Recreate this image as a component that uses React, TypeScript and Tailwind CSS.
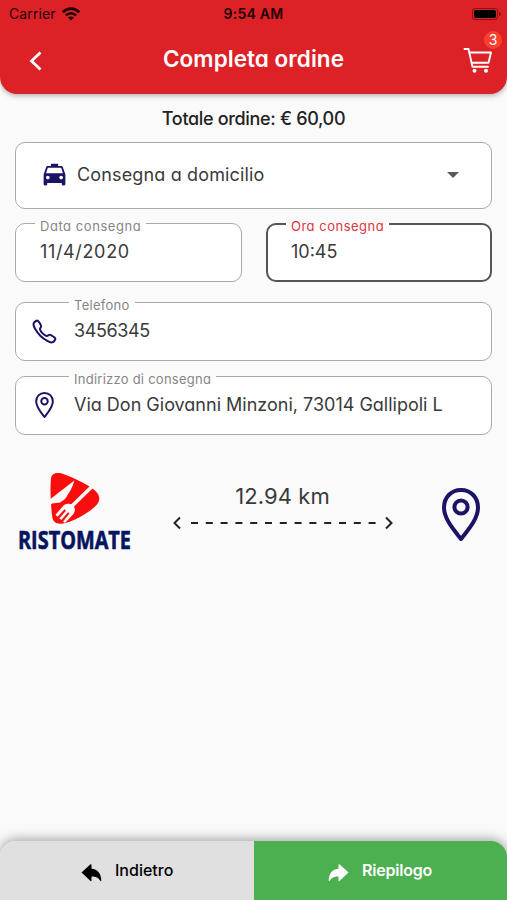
import type { ReactNode } from "react";
import clsx from "clsx";
import { IoCallOutline } from "react-icons/io5";
import { MdLocalTaxi } from "react-icons/md";

type FieldProps = {
  label: string;
  value: string;
  labelClass?: string;
  valueClass?: string;
  icon?: ReactNode;
  focused?: boolean;
  className?: string;
};

function Field({ label, value, labelClass, valueClass, icon, focused, className }: FieldProps) {
  return (
    <fieldset
      className={clsx(
        "h-[59px] min-w-0 rounded-[10px] bg-white",
        focused ? "border-2 border-[#555]" : "border border-[#a9a9a9]",
        className,
      )}
    >
      <legend
        className={clsx(
          "h-0 whitespace-nowrap px-[5px] text-[13px] leading-[4px]",
          icon ? "ml-[53px]" : focused ? "ml-[18px]" : "ml-[19px]",
          focused ? "text-[#e0343b]" : "text-[#858585]",
          labelClass,
        )}
      >
        {label}
      </legend>
      <div className={clsx("flex items-center", focused ? "h-[53px]" : "h-[55px]")}>
        {icon && <div className="flex w-[57px] shrink-0 justify-center text-[#1b1464]">{icon}</div>}
        <span
          className={clsx(
            "whitespace-nowrap text-lg leading-none text-[#3a3a3a]",
            icon ? "pl-px" : focused ? "pl-[23px]" : "pl-6",
            valueClass,
          )}
        >
          {value}
        </span>
      </div>
    </fieldset>
  );
}

function Pin({ className, strokeWidth }: { className: string; strokeWidth: number }) {
  return (
    <svg viewBox="0 0 38 53" className={className} fill="none" stroke="#1b1464" strokeWidth={strokeWidth} strokeLinejoin="round">
      <path d="M19 2C9 2 2 9.500 2 19.500C2 31 12 42 19 51C26 42 36 31 36 19.500C36 9.500 29 2 19 2Z" />
      <circle cx="19" cy="19" r="6.600" />
    </svg>
  );
}

function Cart() {
  return (
    <svg viewBox="0 0 30 26" className="h-[26px] w-[30px]" fill="none" stroke="white" strokeWidth="1.900" strokeLinecap="round" strokeLinejoin="round">
      <path d="M1.500 1H5.500L9.500 18.700H25" />
      <path d="M6.500 4.500H28L25.500 14.700H8.700" />
      <circle cx="11.500" cy="22.800" r="2" fill="white" stroke="none" />
      <circle cx="23" cy="22.800" r="2" fill="white" stroke="none" />
    </svg>
  );
}

function Wifi() {
  return (
    <svg viewBox="0 0 18 14" className="h-[14px] w-[18px]" fill="none" stroke="#1c0304" strokeWidth="2.700">
      <path d="M0.800 5.200C5.500 0.400 12.500 0.400 17.200 5.200" />
      <path d="M3.900 8.400C6.800 5.500 11.200 5.500 14.100 8.400" />
      <path d="M9 13.500L6 10.500C7.700 9 10.300 9 12 10.500Z" fill="#1c0304" stroke="none" />
    </svg>
  );
}

function TurnArrow({ className }: { className: string }) {
  return (
    <svg viewBox="0 0 20 18" className={className} fill="currentColor">
      <path d="M0 8.500L9 0.300Q10 0 10 1V4.700C16 4.900 19.800 9.500 19.800 16.800Q19.500 17.600 18.800 16.800C16.800 13.700 14.500 12.500 10 12.500V16.500Q10 17.500 9 17Z" />
    </svg>
  );
}

function Logo() {
  return (
    <svg viewBox="0 0 116 90" className="h-[90px] w-[116px] overflow-visible">
      <path d="M34 7C34.500 3 39 1 44 2.300C51 4.500 64 10 74 16.500C84 23 85 30 77 36.500C69 43 58 50 46 52.500C39 53.500 35.500 51 35 44C33.500 31 33 18 34 7Z" fill="#fc0d0d" />
      {/* knife */}
      <path d="M57.300 9.500L31.500 29.500V35.500L35 32.500L43 31.500L48 28C52 22 56 16 57.300 9.500Z" fill="#fafafa" />
      {/* fork */}
      <path d="M75 15.500L55 35" stroke="#fafafa" strokeWidth="3.600" />
      <path d="M47 34C50 32 54 32.500 56 34.500C58.500 37 58.500 40.500 56 43.500L48 52L46 50.500L52.500 42.500L51 41.200L44.300 49L42.300 47.300L49 39.700L47.500 38.300L40.500 45.700L38.500 43.700Z" fill="#fafafa" />
      <text x="1" y="77.500" textLength="113" lengthAdjust="spacingAndGlyphs" fill="#07145f" stroke="#07145f" strokeWidth="0.600" className="font-['Open_Sans',sans-serif] text-[25px] font-bold">
        RISTOMATE
      </text>
    </svg>
  );
}

export default function App() {
  return (
    <div className="flex h-[900px] w-[507px] flex-col overflow-hidden bg-[#fafafa] font-['Inter',sans-serif] [font-feature-settings:'cv11']">
      <header className="h-[94px] shrink-0 rounded-b-[17px] bg-[#dc2127] shadow-[0_2px_5px_rgba(0,0,0,0.28)]">
        <div className="grid h-[27px] grid-cols-3 items-center text-[#1c0304] [font-feature-settings:normal]">
          <div className="flex items-center gap-1.5 pl-[9px] text-sm leading-none">
            <span className="tracking-[0.1px]">Carrier</span>
            <Wifi />
          </div>
          <span className="text-center text-sm font-semibold leading-none tracking-[0.25px]">9:54 AM</span>
          <div className="flex items-center justify-end gap-px pr-1.5">
            <div className="h-[12px] w-[26px] rounded-[3px] border border-[#8b1216] p-px">
              <div className="h-full rounded-[2px] bg-black" />
            </div>
            <div className="h-1 w-0.5 rounded-r bg-[#8b1216]" />
          </div>
        </div>
        <div className="grid h-[67px] grid-cols-[1fr_auto_1fr] items-center px-[29px]">
          <svg viewBox="0 0 13 20" className="h-5 w-[13px]" fill="none" stroke="white" strokeWidth="2.800">
            <path d="M11.500 1.500L2.500 10L11.500 18.500" />
          </svg>
          <h1 className="pb-1 text-[22.500px] font-semibold tracking-[0.050px] text-white">Completa ordine</h1>
          <div className="relative -mr-[15px] w-[30px] justify-self-end">
            <Cart />
            <span className="absolute -top-[17px] left-[21px] flex size-[18px] items-center justify-center rounded-full bg-[#f9402f] text-sm text-white">3</span>
          </div>
        </div>
      </header>

      <main className="flex flex-1 flex-col px-[15px]">
        <h2 className="pt-[15px] text-center text-lg font-medium leading-5 tracking-[-0.330px] text-[#222]">Totale ordine: € 60,00</h2>

        <div className="mt-[13px] flex h-[67px] items-center rounded-[10px] border border-[#a9a9a9] bg-white pb-0.5 pl-6 pr-8">
          <MdLocalTaxi className="size-[29px] text-[#1b1464]" />
          <span className="ml-2 flex-1 text-lg leading-none tracking-[0.150px] text-[#3a3a3a]">Consegna a domicilio</span>
          <span className="h-0 w-0 border-x-[6px] border-t-[6px] border-x-transparent border-t-[#5a5a5a]" />
        </div>

        <div className="mt-[14px] grid grid-cols-[227px_226px] justify-between">
          <Field label="Data consegna" value="11/4/2020" labelClass="tracking-[0.550px]" valueClass="tracking-[0.650px]" />
          <Field label="Ora consegna" value="10:45" labelClass="tracking-[0.500px]" focused />
        </div>
        <Field
          className="mt-5"
          label="Telefono"
          value="3456345"
          labelClass="tracking-[0.280px]"
          valueClass="tracking-[-0.400px]"
          icon={<IoCallOutline className="size-[27px] translate-y-px [&_path]:[stroke-width:38px]" />}
        />
        <Field
          className="mt-[15px]"
          label="Indirizzo di consegna"
          value="Via Don Giovanni Minzoni, 73014 Gallipoli L"
          labelClass="tracking-[0.250px]"
          icon={<Pin className="h-[26px] w-[19px]" strokeWidth={4} />}
        />

        <div className="mt-9 flex items-start justify-between pl-[2px] pr-[12px]">
          <Logo />
          <div className="mr-[10px] flex w-[222px] flex-col items-center pt-[11px]">
            <span className="text-[22px] leading-7 tracking-[0.100px] text-[#3a3a3a]">12.94 km</span>
            <svg viewBox="0 0 222 14" className="mt-1.5 h-[14px] w-[222px]" fill="none" stroke="#222" strokeWidth="2">
              <path d="M8 1.500L2.500 7L8 12.500M214 1.500L219.500 7L214 12.500" />
              <path d="M19 7H206" strokeDasharray="7 7.800" strokeWidth="1.800" />
            </svg>
          </div>
          <Pin className="mt-[17px] h-[53px] w-[38px]" strokeWidth={4} />
        </div>
      </main>

      <footer className="grid h-[59px] shrink-0 grid-cols-[254px_253px] overflow-hidden rounded-t-[16px] shadow-[0_-2px_12px_rgba(0,0,0,0.35)]">
        <button className="flex items-center gap-[13px] bg-[#e0e0e0] pl-[81px] text-base font-medium text-black">
          <TurnArrow className="mt-1 h-[18px] w-[21px]" />
          <span className="pb-0.5">Indietro</span>
        </button>
        <button className="flex items-center gap-[13px] bg-[#4caf50] pl-[74px] text-base font-semibold tracking-[-0.200px] text-white">
          <TurnArrow className="mt-1 h-[18px] w-[21px] -scale-x-100" />
          <span className="pb-0.5">Riepilogo</span>
        </button>
      </footer>
    </div>
  );
}
